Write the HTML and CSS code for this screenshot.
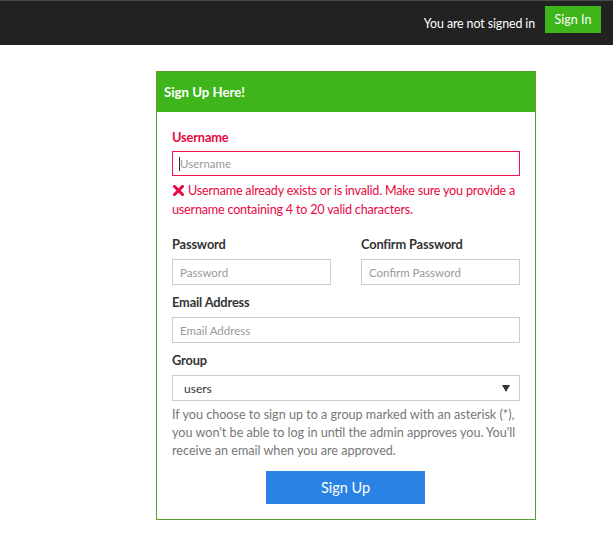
FILE: index.html
```html
<!DOCTYPE html>
<html>
<head>
<meta charset="utf-8">
<link rel="stylesheet" href="styles.css">
</head>
<body>
<header class="topbar">
  <span class="status">You are not signed in</span>
  <a class="signin" href="#">Sign In</a>
</header>
<main class="page">
  <section class="card">
    <div class="card-head">Sign Up Here!</div>
    <form class="card-body">
      <div class="group has-error">
        <label class="label">Username</label>
        <div class="input input-error"><span class="caret"></span><span class="ph">Username</span></div>
        <p class="error-msg"><svg class="x" width="11" height="11" viewBox="0 0 11 11"><path d="M1.5 1.5L9.5 9.5M9.5 1.5L1.5 9.5" stroke="#e8083f" stroke-width="3" stroke-linecap="square"/></svg>Username already exists or is invalid. Make sure you provide a username containing 4 to 20 valid characters.</p>
      </div>
      <div class="row">
        <div class="group">
          <label class="label">Password</label>
          <div class="input"><span class="ph">Password</span></div>
        </div>
        <div class="group">
          <label class="label">Confirm Password</label>
          <div class="input"><span class="ph">Confirm Password</span></div>
        </div>
      </div>
      <div class="group">
        <label class="label">Email Address</label>
        <div class="input"><span class="ph">Email Address</span></div>
      </div>
      <div class="group">
        <label class="label">Group</label>
        <div class="input select"><span class="val">users</span><svg class="arrow" width="8" height="7" viewBox="0 0 8 7"><path d="M0 0H8L4 7Z" fill="#333"/></svg></div>
        <p class="help">If you choose to sign up to a group marked with an asterisk (*), you won't be able to log in until the admin approves you. You'll receive an email when you are approved.</p>
      </div>
      <div class="actions">
        <button type="button" class="btn">Sign Up</button>
      </div>
    </form>
  </section>
</main>
</body>
</html>
```
FILE: styles.css
```css
* { box-sizing: border-box; }
html, body { margin: 0; padding: 0; background: #fff; }
body { font-family: Lato, "Open Sans", sans-serif; color: #333; }

.topbar {
  height: 45px;
  background: #222;
  border-top: 1px solid #4a4a4a;
  display: flex;
  align-items: center;
  justify-content: flex-end;
  padding-right: 12px;
}
.status { color: #fff; font-size: 12.4px; letter-spacing: -0.1px; margin-right: 10px; }
.signin {
  display: flex; align-items: center; justify-content: center;
  width: 56px; height: 27px;
  background: #3db51b; color: #fff; text-decoration: none;
  font-size: 12.5px; margin-top: -8px;
}

.page { padding: 26px 0 14px 156px; }
.card { width: 380px; border: 1px solid #5a9e2a; }
.card-head {
  height: 40px; background: #3db51b; color: #fff;
  font-weight: 700; font-size: 13.2px;
  display: flex; align-items: center; padding-left: 7px;
}
.card-body { padding: 15px 15px 15px; margin: 0; }

.group { margin-bottom: 7px; }
.has-error { margin-bottom: 15px; }
.label { display: block; font-size: 12.8px; letter-spacing: -0.15px; font-weight: 700; line-height: 20px; margin-bottom: 5px; color: #333; }
.has-error .label { color: #e8083f; margin-bottom: 4px; }

.input {
  height: 26px; border: 1px solid #ccc; display: flex; align-items: center;
  padding-left: 7px; font-size: 11.5px;
}
.has-error .input-error { border: 1px solid #f2164c; height: 25px; padding-left: 6px; }
.caret { width: 1px; height: 14px; background: #333; }
.ph { color: #999; }
.select { padding-left: 11px; padding-right: 9px; justify-content: space-between; font-size: 12px; }
.val { color: #333; }

.error-msg { margin: 5px 0 0; color: #e8083f; font-size: 12.6px; letter-spacing: -0.2px; line-height: 19px; }
.x { display: inline-block; vertical-align: -1px; margin: 0 4px 0 1px; }

.row { display: grid; grid-template-columns: 1fr 1fr; column-gap: 30px; }

.help { margin: 5px 0 0; color: #777; font-size: 12.6px; line-height: 18px; }
.actions { display: flex; justify-content: center; padding-top: 4px; }
.btn {
  width: 159px; height: 33px; border: 0; background: #2a82e4; color: #fff;
  font-family: inherit; font-size: 14.5px; margin-left: -1px;
}
```
